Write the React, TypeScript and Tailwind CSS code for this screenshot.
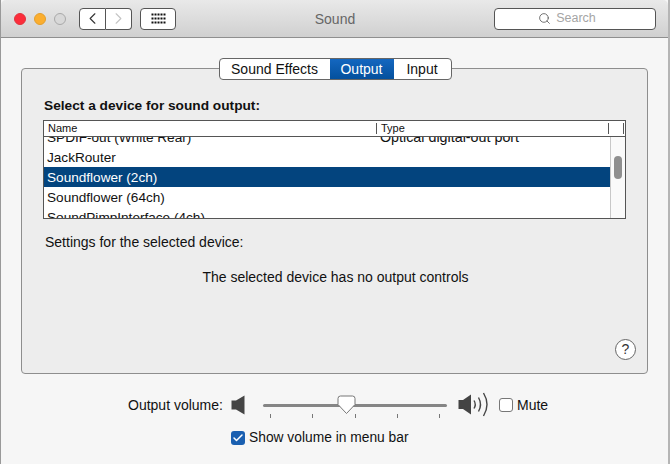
import { ChevronLeft, ChevronRight, Search, Check } from 'lucide-react';

const font = { fontFamily: '"Liberation Sans", Arial, sans-serif' };

const devices = [
  { name: 'SPDIF-out (White Rear)', type: 'Optical digital-out port' },
  { name: 'JackRouter', type: '' },
  { name: 'Soundflower (2ch)', type: '', selected: true },
  { name: 'Soundflower (64ch)', type: '' },
  { name: 'SoundPimpInterface (4ch)', type: '' },
];

const GridIcon = () => (
  <svg width="15" height="11" viewBox="0 0 15 11" fill="#111">
    {[0, 4, 8].map((y) =>
      [0, 3, 6, 9, 12].map((x) => <rect key={`${x}-${y}`} x={x + 0.5} y={y + 0.5} width="2" height="2" />),
    )}
  </svg>
);

const SmallSpeaker = () => (
  <svg width="14" height="20" viewBox="0 0 14 20">
    <path d="M0.5 5.5 H5 L13.5 0.5 V19.5 L5 14.5 H0.5 Z" fill="#444" />
  </svg>
);

const BigSpeaker = () => (
  <svg width="32" height="26" viewBox="0 0 32 26" fill="none">
    <path d="M0.5 8 H5 L13 2.5 V22.5 L5 17 H0.5 Z" fill="#444" />
    <path d="M16 8.5 Q18.5 12.5 16 16.5" stroke="#444" strokeWidth="1.4" />
    <path d="M20.5 5.5 Q24.5 12.5 20.5 19.5" stroke="#444" strokeWidth="1.4" />
    <path d="M25.5 1 Q32.5 12.5 25.5 24" stroke="#444" strokeWidth="1.4" />
  </svg>
);

const Thumb = () => (
  <svg width="19" height="20" viewBox="0 0 19 20">
    <path d="M1 3.5 Q1 1 3.5 1 H15.5 Q18 1 18 3.5 V9.5 L9.5 18.5 L1 9.5 Z" fill="#fff" stroke="#777" strokeWidth="1" />
  </svg>
);

export default function App() {
  return (
    <div className="w-[670px] h-[464px] overflow-hidden bg-[#f6f6f6] text-[14px] text-[#111] border-l border-l-[#999] border-r-2 border-r-[#b5b5b5]" style={font}>
      {/* Title bar */}
      <div className="h-[38px] flex items-center pl-[13px] pr-[12px] bg-gradient-to-b from-[#e9e9e9] to-[#d0d0d0] border-b border-[#8f8f8f] rounded-t-[5px]">
        <div className="flex gap-2 items-center">
          <span className="w-3 h-3 rounded-full bg-[#fc2d3b] border border-[#e0343d]"></span>
          <span className="w-3 h-3 rounded-full bg-[#fbae2f] border border-[#e39f2d]"></span>
          <span className="w-3 h-3 rounded-full bg-[#d8d8d8] border border-[#a9a9a9]"></span>
        </div>
        <div className="flex ml-[13px]">
          <button className="w-[27px] h-[22px] bg-white border border-[#555] rounded-l-[4px] flex items-center justify-center">
            <ChevronLeft className="w-[19px] h-[19px] text-[#333]" strokeWidth={1.4} />
          </button>
          <button className="w-[26px] h-[22px] bg-white border border-l-0 border-[#555] rounded-r-[4px] flex items-center justify-center">
            <ChevronRight className="w-[19px] h-[19px] text-[#c4c4c4]" strokeWidth={1.4} />
          </button>
        </div>
        <button className="ml-2 w-9 h-[22px] bg-white border border-[#555] rounded-[4px] flex items-center justify-center">
          <GridIcon />
        </button>
        <div className="flex-1 text-center text-[#666] pt-px">Sound</div>
        <div className="w-[162px] h-[22px] bg-white border border-[#555] rounded-[4px] flex items-center justify-center gap-[5px] pr-[16px] text-[12.5px] text-[#a5a5a5]">
          <Search className="w-[13px] h-[13px] text-[#555]" strokeWidth={1.5} />
          Search
        </div>
      </div>

      {/* Panel */}
      <div className="mt-[30px] ml-5 w-[627px] h-[306px] bg-[#ededed] border border-[#8e8e8e] rounded-[4px] flex flex-col px-[21px]">
        <div className="-mt-[11px] flex self-center mr-[-1px] h-[22px] bg-white border border-[#666] rounded-[4px] overflow-hidden leading-[19px]">
          <div className="w-[110px] flex items-center justify-center">Sound Effects</div>
          <div className="w-[64px] flex items-center justify-center text-white bg-gradient-to-b from-[#1467c0] to-[#04509d]">Output</div>
          <div className="w-[57px] flex items-center justify-center">Input</div>
        </div>

        <div className="mt-[18px] ml-px font-bold text-[13.7px] leading-[15px]">Select a device for sound output:</div>

        {/* Device table */}
        <div className="mt-[7px] h-[99px] border border-[#555] bg-white overflow-hidden flex flex-col">
          <div className="h-4 shrink-0 flex items-center text-[11px] border-b border-[#555] relative z-10 bg-white">
            <div className="w-[333px] pl-1 border-r border-[#555] h-[11px] flex items-center">Name</div>
            <div className="w-[232px] pl-1 border-r border-[#555] h-[11px] flex items-center">Type</div>
            <div className="ml-[14px] w-px h-[11px] bg-[#555]"></div>
          </div>
          <div className="flex flex-1 min-h-0">
            <div className="flex-1 overflow-hidden text-[13.6px]">
              <div className="-mt-[10px]">
                {devices.map((device) => (
                  <div
                    key={device.name}
                    className={`h-5 flex items-center px-[3px] pt-[2px] ${device.selected ? 'bg-[#03447e] text-white' : ''}`}
                  >
                    <span className="w-[333px] shrink-0">{device.name}</span>
                    <span className="text-[14.3px]">{device.type}</span>
                  </div>
                ))}
              </div>
            </div>
            <div className="w-[15px] bg-[#fafafa] border-l border-[#c8c8c8] pt-[19px] pl-[3px]">
              <div className="w-2 h-[23px] rounded-full bg-[#8f8f8f]"></div>
            </div>
          </div>
        </div>

        <div className="mt-[16px] ml-[2px] leading-[15px]">Settings for the selected device:</div>
        <div className="mt-[20px] text-center leading-[15px] mr-[-2px]">The selected device has no output controls</div>
        <div className="mt-auto mb-[13px] self-end -mr-[10px] w-[21px] h-[21px] rounded-full border border-[#666] bg-white flex items-center justify-center text-[14px] text-[#333]">?</div>
      </div>

      {/* Volume */}
      <div className="mt-[18px] ml-[127px] h-[26px] flex items-center">
        <span className="w-[103px]">Output volume:</span>
        <SmallSpeaker />
        <div className="relative ml-[18px] w-[184px] h-[26px]">
          <div className="mt-[12px] h-[3px] rounded-full bg-[#858585]"></div>
          <div className="mt-[7px] px-[7px] flex justify-between">
            {[0, 1, 2, 3, 4].map((tick) => (
              <span key={tick} className="w-px h-1 bg-[#777]"></span>
            ))}
          </div>
          <div className="absolute left-[74px] top-[3px]">
            <Thumb />
          </div>
        </div>
        <div className="ml-[11px]">
          <BigSpeaker />
        </div>
        <span className="ml-[9px] w-[14px] h-[14px] bg-white border border-[#777] rounded-[3px]"></span>
        <span className="ml-1">Mute</span>
      </div>
      <div className="mt-[10px] ml-[230px] flex items-center gap-1 text-[13.8px]">
        <span className="w-[14px] h-[14px] rounded-[3px] bg-[#1a5fb0] flex items-center justify-center">
          <Check className="w-3 h-3 text-white" strokeWidth={3} />
        </span>
        Show volume in menu bar
      </div>
    </div>
  );
}
